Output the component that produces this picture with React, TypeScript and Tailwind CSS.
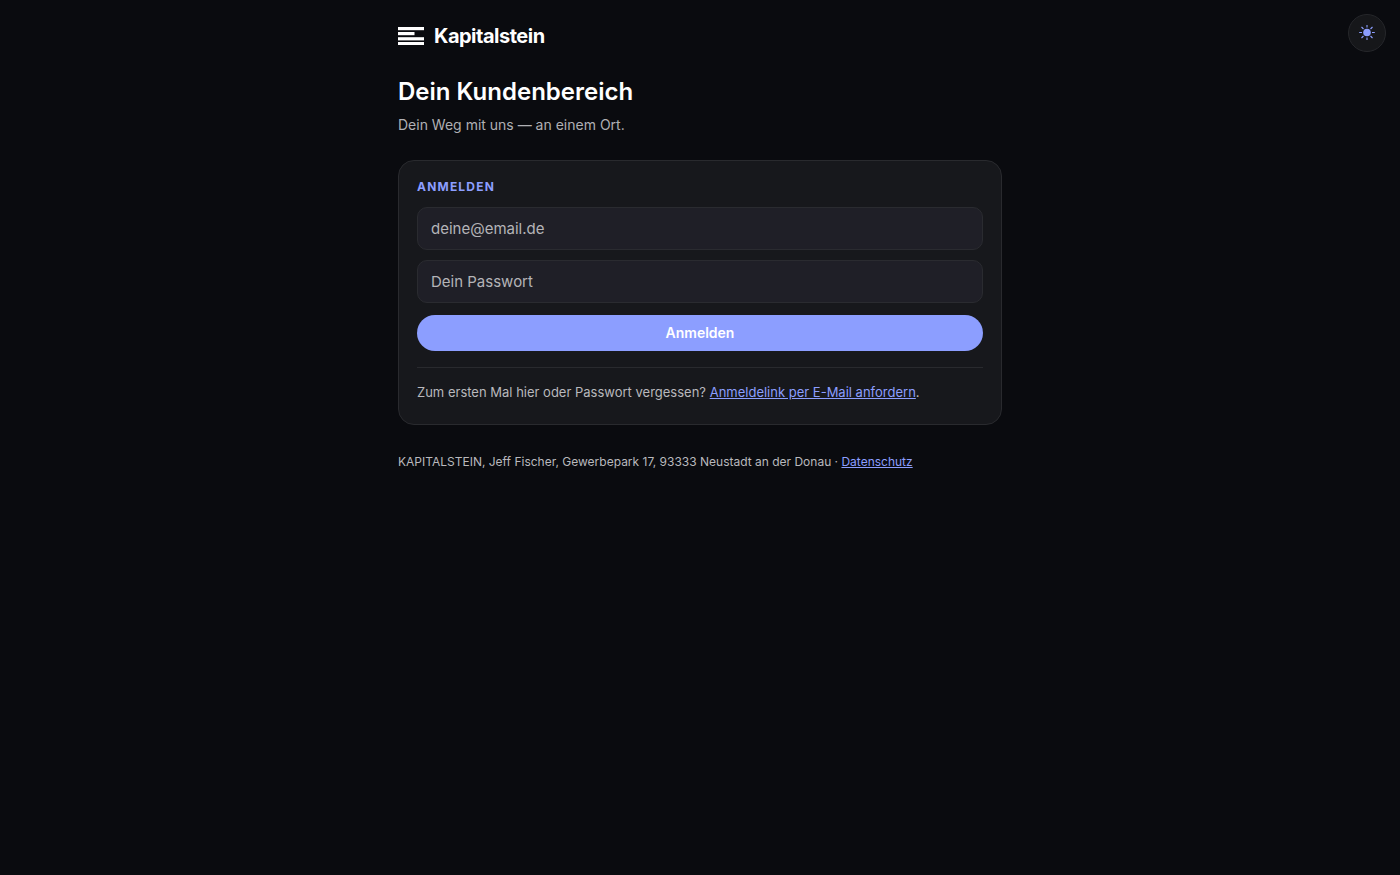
import { useState, type FormEvent } from 'react';

// Login-Seite des Kundenbereichs: Marke, Überschrift, Anmeldekarte, Fußzeile.

function BrandMark() {
  return (
    <svg width="26" height="18" viewBox="0 0 26 18" fill="currentColor" aria-hidden="true">
      <rect y="0" width="26" height="3.2" />
      <rect y="5" width="16.5" height="3.2" />
      <rect y="10.2" width="26" height="3.2" />
      <rect y="15" width="26" height="3" />
    </svg>
  );
}

function SunIcon() {
  return (
    <svg width="16" height="16" viewBox="0 0 16 16" aria-hidden="true">
      <circle cx="8" cy="7.5" r="3.8" fill="currentColor" />
      <path
        d="M8 0v2.6M8 12.4V15M.2 7.5h2.8M13 7.5h2.8M2.5 2l2 2M11.5 11l2 2M2.5 13l2-2M11.5 4l2-2"
        stroke="currentColor"
        strokeWidth="1.1"
        fill="none"
      />
    </svg>
  );
}

type FieldProps = {
  id: string;
  type: 'email' | 'password';
  label: string;
  placeholder: string;
  value: string;
  onChange: (v: string) => void;
};

function Field({ id, type, label, placeholder, value, onChange }: FieldProps) {
  return (
    <input
      id={id}
      type={type}
      aria-label={label}
      value={value}
      onChange={(e) => onChange(e.target.value)}
      placeholder={placeholder}
      className="block h-[43px] w-full rounded-[10px] border border-[#2a2b30] bg-[#1f1f27] px-[13px] text-[15px] text-white placeholder:text-[#b4b4b8] focus:border-[#8c9eff] focus:outline-none"
    />
  );
}

export default function App() {
  const [email, setEmail] = useState('');
  const [password, setPassword] = useState('');

  function submit(e: FormEvent) {
    e.preventDefault();
  }

  return (
    <div className="min-h-screen bg-[#0a0b0f] font-['Inter','Liberation_Sans',sans-serif] text-white">
      <button
        type="button"
        aria-label="Helles Design"
        className="fixed top-3.5 right-3.5 flex size-[38px] items-center justify-center rounded-full border border-[#26272b] bg-[#16171a] text-[#8c9eff]"
      >
        <SunIcon />
      </button>

      <main className="mx-auto max-w-[640px] px-[18px] pt-6">
        <div className="flex h-6 items-center gap-2.5">
          <BrandMark />
          <span className="text-xl font-bold tracking-tight">Kapitalstein</span>
        </div>

        <h1 className="mt-7 text-2xl leading-8 font-semibold">Dein Kundenbereich</h1>
        <p className="mt-1.5 text-sm leading-[22px] text-[#b0b0b4]">
          Dein Weg mit uns — an einem Ort.
        </p>

        <section className="mt-6 rounded-2xl border border-[#292a2e] bg-[#17181c] px-[18px] pt-4 pb-[21px]">
          <h2 className="text-xs leading-5 font-bold tracking-widest text-[#8c9eff] uppercase">
            Anmelden
          </h2>
          <form onSubmit={submit} className="mt-2.5">
            <div className="space-y-2.5">
              <Field
                id="email"
                type="email"
                label="E-Mail"
                placeholder="deine@email.de"
                value={email}
                onChange={setEmail}
              />
              <Field
                id="password"
                type="password"
                label="Passwort"
                placeholder="Dein Passwort"
                value={password}
                onChange={setPassword}
              />
            </div>
            <button
              type="submit"
              className="mt-3 h-9 w-full rounded-full bg-[#8c9eff] text-sm font-semibold text-white"
            >
              Anmelden
            </button>
          </form>
          <p className="mt-4 border-t border-[#292a2e] pt-3.5 text-[13px] leading-[21px] text-[#b9b9bd]">
            Zum ersten Mal hier oder Passwort vergessen?{' '}
            <a href="#anmeldelink" className="text-[#8c9eff] underline">
              Anmeldelink per E-Mail anfordern
            </a>
            .
          </p>
        </section>

        <footer className="mt-[27px] text-xs leading-5 text-[#b9b9bd]">
          KAPITALSTEIN, Jeff Fischer, Gewerbepark 17, 93333 Neustadt an der Donau ·{' '}
          <a href="#datenschutz" className="text-[#8c9eff] underline">
            Datenschutz
          </a>
        </footer>
      </main>
    </div>
  );
}
